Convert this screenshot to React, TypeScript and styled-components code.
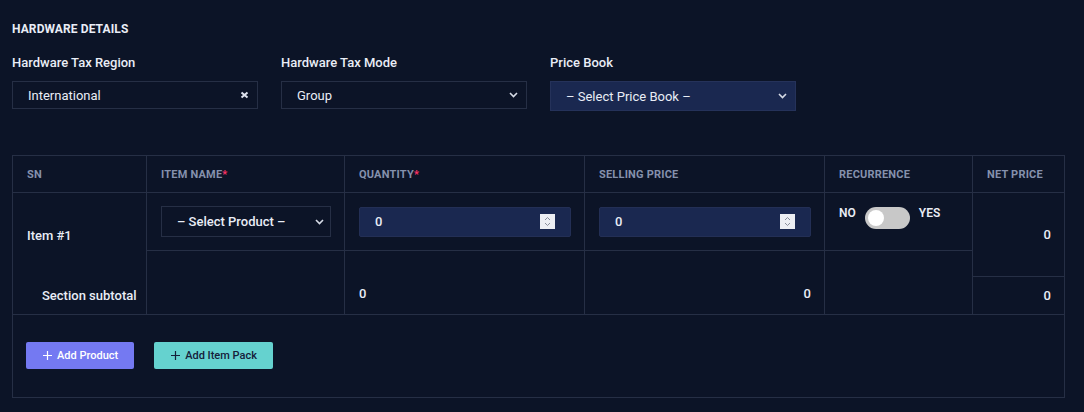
import React, { FC, useState } from 'react';
import styled, { createGlobalStyle } from 'styled-components';

const BG = '#0c1427';
const LINE = '#262f45';
const TEXT = '#e9edf6';
const MUTED = '#8591ad';
const FIELD = '#1a2850';

const GlobalStyle = createGlobalStyle`
  body {
    margin: 0;
    background: ${BG};
    font-family: Roboto, 'Noto Sans', sans-serif;
    color: ${TEXT};
  }
`;

const Page = styled.div`
  width: 1084px;
  height: 412px;
  padding: 22px 12px 0;
  box-sizing: border-box;
`;

const Title = styled.h6`
  margin: 0 0 19px;
  font-size: 12px;
  font-weight: 700;
  letter-spacing: 0.1px;
  text-transform: uppercase;
`;

const FieldRow = styled.div`
  display: grid;
  grid-template-columns: repeat(3, 246px);
  column-gap: 23px;
  margin-bottom: 44px;
`;

const Field = styled.div`
  display: flex;
  flex-direction: column;
`;

const Label = styled.label`
  font-size: 13px;
  font-weight: 500;
  line-height: 16px;
  margin-bottom: 10px;
`;

const SelectBox = styled.div<{ $filled?: boolean; $h?: number }>`
  display: flex;
  align-items: center;
  justify-content: space-between;
  height: ${p => p.$h || 28}px;
  box-sizing: border-box;
  padding: 0 8px 0 15px;
  border: 1px solid ${p => (p.$filled ? '#25325a' : LINE)};
  background: ${p => (p.$filled ? FIELD : 'transparent')};
  font-size: 13px;
  color: ${TEXT};
`;

const Chevron: FC = () => (
  <svg width="9" height="6" viewBox="0 0 9 6">
    <path d="M1 1l3.5 3.5L8 1" stroke="#d6dbe6" strokeWidth="1.6" fill="none" />
  </svg>
);

const ClearIcon: FC = () => (
  <svg width="9" height="8" viewBox="0 0 9 8">
    <path d="M1.5 1.5l6 5M7.5 1.5l-6 5" stroke="#dfe4ef" strokeWidth="2" />
  </svg>
);

const Table = styled.div`
  display: grid;
  grid-template-columns: 134px 198px 240px 240px 148px 92px;
  grid-template-rows: 37px 58px 26px 38px 83px;
  border-left: 1px solid ${LINE};
  border-top: 1px solid ${LINE};
  width: 1053px;
  box-sizing: border-box;
`;

const Cell = styled.div<{
  $col: string;
  $row: string;
  $noBottom?: boolean;
  $align?: 'start' | 'center' | 'end';
  $justify?: 'flex-start' | 'flex-end';
  $padL?: number;
}>`
  grid-column: ${p => p.$col};
  grid-row: ${p => p.$row};
  border-right: 1px solid ${LINE};
  border-bottom: ${p => (p.$noBottom ? 'none' : `1px solid ${LINE}`)};
  display: flex;
  align-items: ${p => p.$align || 'center'};
  justify-content: ${p => p.$justify || 'flex-start'};
  padding: 0 13px 0 ${p => p.$padL ?? 14}px;
  font-size: 13px;
  font-weight: 500;
  white-space: nowrap;
  min-width: 0;
`;

const HeadCell = styled(Cell)`
  font-size: 11px;
  font-weight: 700;
  color: ${MUTED};
  text-transform: uppercase;
  letter-spacing: 0.2px;
`;

const Req = styled.span`
  color: #ff3366;
`;

const NumberBox = styled.div`
  flex: 1;
  height: 30px;
  display: flex;
  align-items: center;
  justify-content: space-between;
  padding: 0 15px;
  box-sizing: border-box;
  background: ${FIELD};
  border: 1px solid #232f55;
  border-radius: 2px;
`;

const Spin = styled.span`
  width: 15px;
  height: 15px;
  background: #eceef3;
  display: flex;
  align-items: center;
  justify-content: center;
`;

const Spinner: FC = () => (
  <Spin>
    <svg width="7" height="11" viewBox="0 0 7 11">
      <path d="M1 4l2.5-2.5L6 4M1 7l2.5 2.5L6 7" stroke="#8a8f9c" strokeWidth="1" fill="none" />
    </svg>
  </Spin>
);

const Recur = styled.div`
  display: flex;
  align-items: flex-start;
  gap: 9px;
  padding-top: 13px;
  font-size: 12px;
  font-weight: 600;
`;

const Track = styled.button<{ $on: boolean }>`
  width: 45px;
  height: 22px;
  border: none;
  border-radius: 11px;
  background: ${p => (p.$on ? '#6e7bf2' : '#c8c8c8')};
  padding: 0;
  position: relative;
  margin-top: 1px;
  cursor: pointer;
`;

const Knob = styled.span<{ $on: boolean }>`
  position: absolute;
  top: 3px;
  left: ${p => (p.$on ? 26 : 3)}px;
  width: 16px;
  height: 16px;
  border-radius: 50%;
  background: #fff;
`;

const Footer = styled.div`
  grid-column: 1 / -1;
  grid-row: 5;
  border-right: 1px solid ${LINE};
  border-bottom: 1px solid ${LINE};
  display: flex;
  align-items: flex-start;
  gap: 20px;
  padding: 27px 0 0 13px;
`;

const Action = styled.button<{ $variant: 'primary' | 'teal' }>`
  height: 27px;
  display: flex;
  align-items: center;
  gap: 5px;
  padding: 0 16px 0 17px;
  border: none;
  border-radius: 2px;
  font-family: inherit;
  font-size: 11px;
  font-weight: 500;
  background: ${p => (p.$variant === 'primary' ? '#7479f2' : '#65d2cf')};
  color: ${p => (p.$variant === 'primary' ? '#ffffff' : '#15203a')};
`;

const Plus: FC<{ color: string }> = ({ color }) => (
  <svg width="9" height="9" viewBox="0 0 9 9">
    <path d="M4.5 0v9M0 4.5h9" stroke={color} strokeWidth="1.2" />
  </svg>
);

const App: FC = () => {
  const [recurring, setRecurring] = useState(false);

  return (
    <>
      <GlobalStyle />
      <Page>
        <Title>Hardware Details</Title>
        <FieldRow>
          <Field>
            <Label>Hardware Tax Region</Label>
            <SelectBox>
              International
              <ClearIcon />
            </SelectBox>
          </Field>
          <Field>
            <Label>Hardware Tax Mode</Label>
            <SelectBox>
              Group
              <Chevron />
            </SelectBox>
          </Field>
          <Field>
            <Label>Price Book</Label>
            <SelectBox $filled $h={30}>
              – Select Price Book –
              <Chevron />
            </SelectBox>
          </Field>
        </FieldRow>

        <Table>
          <HeadCell $col="1" $row="1">SN</HeadCell>
          <HeadCell $col="2" $row="1">Item Name<Req>*</Req></HeadCell>
          <HeadCell $col="3" $row="1">Quantity<Req>*</Req></HeadCell>
          <HeadCell $col="4" $row="1">Selling Price</HeadCell>
          <HeadCell $col="5" $row="1">Recurrence</HeadCell>
          <HeadCell $col="6" $row="1">Net Price</HeadCell>

          <Cell $col="1" $row="2 / 4" $noBottom>Item #1</Cell>
          <Cell $col="2" $row="2">
            <SelectBox $h={31} style={{ flex: 1, paddingRight: 6 }}>
              – Select Product –
              <Chevron />
            </SelectBox>
          </Cell>
          <Cell $col="3" $row="2">
            <NumberBox>
              0
              <Spinner />
            </NumberBox>
          </Cell>
          <Cell $col="4" $row="2">
            <NumberBox>
              0
              <Spinner />
            </NumberBox>
          </Cell>
          <Cell $col="5" $row="2" $align="start">
            <Recur>
              NO
              <Track $on={recurring} onClick={() => setRecurring(!recurring)}>
                <Knob $on={recurring} />
              </Track>
              YES
            </Recur>
          </Cell>
          <Cell $col="6" $row="2 / 4" $justify="flex-end">0</Cell>

          <Cell $col="1" $row="4" $padL={29}>Section subtotal</Cell>
          <Cell $col="2" $row="3 / 5" />
          <Cell $col="3" $row="3 / 5" $align="end" style={{ paddingBottom: 13 }}>0</Cell>
          <Cell $col="4" $row="3 / 5" $align="end" $justify="flex-end" style={{ paddingBottom: 13 }}>0</Cell>
          <Cell $col="5" $row="3 / 5" />
          <Cell $col="6" $row="4" $justify="flex-end">0</Cell>

          <Footer>
            <Action $variant="primary">
              <Plus color="#ffffff" />
              Add Product
            </Action>
            <Action $variant="teal">
              <Plus color="#15203a" />
              Add Item Pack
            </Action>
          </Footer>
        </Table>
      </Page>
    </>
  );
};

export default App;
